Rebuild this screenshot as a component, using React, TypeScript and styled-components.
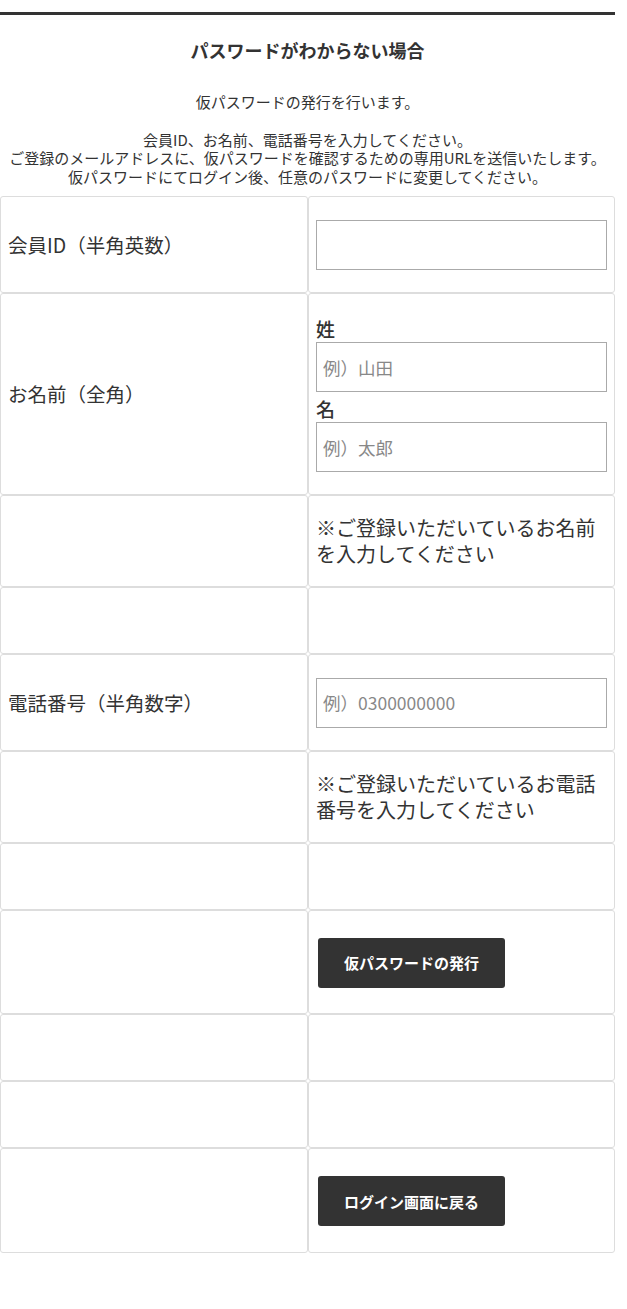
import React from "react"
import styled, { createGlobalStyle } from "styled-components"

const GlobalStyle = createGlobalStyle`
  *, *::before, *::after {
    box-sizing: border-box;
  }
  body {
    margin: 0;
    background: #fff;
    color: #333;
    font-family: "Noto Sans CJK JP", "Noto Sans", sans-serif;
  }
`

const Page = styled.div`
  width: 615px;
  padding-top: 12px;
  padding-bottom: 55px;
`

const Rule = styled.div`
  height: 3px;
  background: #333;
`

const Title = styled.h2`
  margin: 22px 0 0;
  font-size: 18px;
  font-weight: 700;
  line-height: 26px;
  text-align: center;
  color: #333;
`

const Lead = styled.div`
  margin-top: 30px;
  margin-bottom: 10px;
  font-size: 15px;
  line-height: 18.5px;
  text-align: center;
  color: #333;

  p {
    margin: 0 0 19px;
  }
  p:last-child {
    margin-bottom: 0;
  }
`

const Table = styled.table`
  width: 615px;
  border-collapse: separate;
  border-spacing: 0;
  table-layout: fixed;
`

const Cell = styled.td<{ $h: number }>`
  height: ${p => p.$h}px;
  border: 1px solid #ddd;
  border-radius: 3px;
  vertical-align: middle;
  padding: 0 7px;
`

const HeadCell = styled(Cell)`
  width: 308px;
  font-size: 19.5px;
  line-height: 26px;
  color: #333;
`

const Note = styled.div`
  font-size: 20px;
  line-height: 26px;
  color: #333;
`

const FieldLabel = styled.div`
  font-size: 19px;
  font-weight: 500;
  line-height: 26px;
  color: #333;
`

const TextInput = styled.input`
  display: block;
  width: 100%;
  height: 50px;
  margin: 0;
  padding: 0 6px;
  border: 1px solid #aaa;
  border-radius: 0;
  font-family: "Noto Sans CJK JP", "Noto Sans", sans-serif;
  font-size: 17.5px;
  color: #333;
  background: #fff;

  & + ${FieldLabel} {
    margin-top: 4px;
  }
  &::placeholder {
    color: #888;
  }
`

const Button = styled.button`
  display: block;
  width: 187px;
  height: 50px;
  margin: 1px 0 0 2px;
  border: none;
  border-radius: 3px;
  background: #333;
  color: #fff;
  font-family: "Noto Sans CJK JP", "Noto Sans", sans-serif;
  font-size: 15px;
  font-weight: 700;
  cursor: pointer;
`

interface RowProps {
  h: number
  label?: string
  children?: React.ReactNode
}

function Row({ h, label, children }: RowProps) {
  return (
    <tr>
      <HeadCell $h={h}>{label}</HeadCell>
      <Cell $h={h}>{children}</Cell>
    </tr>
  )
}

export default function App() {
  return (
    <Page>
      <GlobalStyle />
      <Rule />
      <Title>パスワードがわからない場合</Title>
      <Lead>
        <p>仮パスワードの発行を行います。</p>
        <p>
          会員ID、お名前、電話番号を入力してください。
          <br />
          ご登録のメールアドレスに、仮パスワードを確認するための専用URLを送信いたします。
          <br />
          仮パスワードにてログイン後、任意のパスワードに変更してください。
        </p>
      </Lead>
      <Table>
        <tbody>
          <Row h={97} label="会員ID（半角英数）">
            <TextInput type="text" />
          </Row>
          <Row h={202} label="お名前（全角）">
            <FieldLabel>姓</FieldLabel>
            <TextInput type="text" placeholder="例）山田" />
            <FieldLabel>名</FieldLabel>
            <TextInput type="text" placeholder="例）太郎" />
          </Row>
          <Row h={92}>
            <Note>※ご登録いただいているお名前を入力してください</Note>
          </Row>
          <Row h={67} />
          <Row h={97} label="電話番号（半角数字）">
            <TextInput type="tel" placeholder="例）0300000000" />
          </Row>
          <Row h={92}>
            <Note>※ご登録いただいているお電話番号を入力してください</Note>
          </Row>
          <Row h={67} />
          <Row h={104}>
            <Button type="button">仮パスワードの発行</Button>
          </Row>
          <Row h={67} />
          <Row h={67} />
          <Row h={105}>
            <Button type="button">ログイン画面に戻る</Button>
          </Row>
        </tbody>
      </Table>
    </Page>
  )
}
